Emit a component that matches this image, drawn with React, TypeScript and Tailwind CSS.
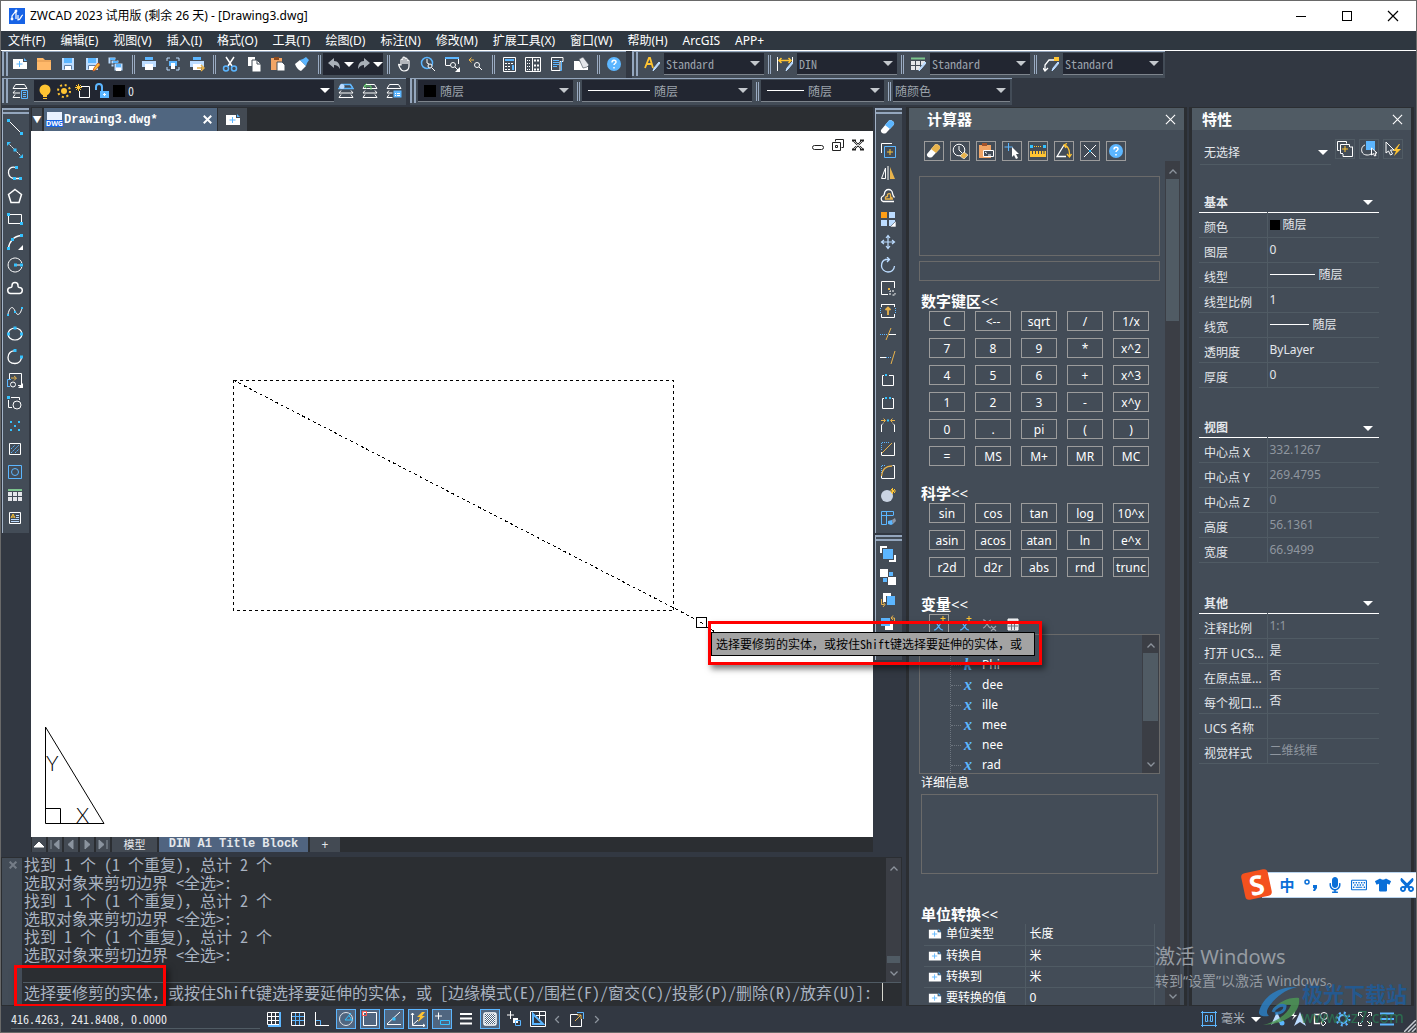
import type { ReactNode } from "react"
import { FaCut, FaMicrophone, FaRegKeyboard, FaTshirt } from "react-icons/fa"

const B = "#5cb6ff"
const C = "#35c2ff"
const Y = "#ffc432"
const O = "#e8b34c"
const L = "#bcdcff"

function Dot({ x, y, c = C }: { x: number; y: number; c?: string }) {
  return <rect x={x} y={y} width="3" height="3" fill={c} stroke="none" />
}

const pencil = <path d="M9 15l1-3 5-6 1 1-5 6z" fill={L} stroke={L} />
const corner = <path d="M16 11v5h-5z" fill="#fff" stroke="none" />
const layers = (
  <>
    <path d="M3.500 1.500h9l2.500 4h-14z" />
    <path d="M3 7.500l-2 2.500h14l-2-2.500M3 11.500l-2 3h14l-2-3" />
  </>
)
const floppy = (
  <>
    <path d="M2 2h12v12H2z" fill={L} stroke="none" />
    <path d="M4 2h8v5H4z" fill={B} stroke="none" />
    <path d="M4 9h8v5H4z" fill="#fff" stroke="none" />
    <path d="M4.500 13.500v-4h7v4" stroke="#5f7fa6" />
  </>
)
const printer = (
  <>
    <path d="M1 5h14v6H1z" fill={L} stroke="none" />
    <path d="M4 1h8v3H4z" fill={B} stroke="none" />
    <path d="M4 8h8v6H4z" fill="#fff" stroke="none" />
  </>
)

const icons: Record<string, ReactNode> = {
  // standard toolbar
  newDoc: (
    <>
      <path d="M1 3h10v3h4v7H1z" fill="#fff" stroke="none" />
      <path d="M12 2l3 3h-3z" fill={B} stroke="none" />
      <path d="M7.500 5v6M4.500 8h6" stroke={B} />
    </>
  ),
  open: (
    <>
      <path d="M1 2h6l2 2h6v10H1z" fill="#ffb96a" stroke="none" />
      <path d="M1 5h14" stroke="#d9924a" />
    </>
  ),
  save: floppy,
  saveAs: (
    <>
      {floppy}
      <path d="M9 15l1-3 4-5 2 1.500-4 5z" fill={Y} stroke="#d9652b" />
    </>
  ),
  saveAll: (
    <>
      <path d="M0 1h8v7H0zM3 4h8v7H3z" fill={L} stroke="#434c57" />
      <path d="M6 7h9v8H6z" fill={L} stroke="#434c57" />
      <path d="M8 8h5v3H8zM2 2h5v2H2zM5 5h5v2H5z" fill={B} stroke="none" />
      <path d="M8 12h5v3H8z" fill="#fff" stroke="none" />
    </>
  ),
  print: printer,
  preview: (
    <>
      <path d="M2 5V2h3M11 2h3v3M14 11v3h-3M5 14H2v-3" stroke={L} />
      <path d="M4 5h8v5H4z" fill={B} stroke="none" />
      <path d="M6 7h4v6H6z" fill="#fff" stroke="none" />
    </>
  ),
  publish: (
    <>
      {printer}
      <path d="M8 12h7M12 9l3 3-3 3" stroke={O} strokeWidth="1.500" />
    </>
  ),
  cut: (
    <>
      <path d="M4 1l6 9M12 1L6 10" strokeWidth="1.500" />
      <circle cx="4" cy="12.500" r="2.500" stroke={B} strokeWidth="1.500" />
      <circle cx="12" cy="12.500" r="2.500" stroke={B} strokeWidth="1.500" />
    </>
  ),
  copy: (
    <>
      <path d="M2 1h7v9H2z" fill="#fff" stroke="none" />
      <path d="M6 4h5l4 4v8H6z" fill="#fff" stroke="#434c57" />
      <path d="M11 4v4h4" stroke="#434c57" />
    </>
  ),
  paste: (
    <>
      <path d="M1 2h11v12H1z" fill="#f2a565" stroke="none" />
      <path d="M4 1h5v3H4z" fill="#8c4a1d" stroke="none" />
      <path d="M7 6h5l3 3v6H7z" fill="#fff" stroke="#434c57" />
    </>
  ),
  brush: (
    <>
      <path d="M1 8l5-4 6 6-5 5c-3-1-5-4-6-7z" fill="#fff" stroke="none" />
      <path d="M6 4l3-1 3-2 3 3-2 3-1 3z" fill={B} stroke="none" />
    </>
  ),
  undo: <path d="M2 7l6-5v3c4 0 6 3 6 8-2-3-3-4-6-4v3z" fill="#a9b0b8" stroke="none" />,
  redo: <path d="M14 7L8 2v3C4 5 2 8 2 13c2-3 3-4 6-4v3z" fill="#a9b0b8" stroke="none" />,
  pan: (
    <path
      d="M5 9V4a1 1 0 012 0v4-6a1 1 0 012 0v6-5a1 1 0 012 0v5-3a1 1 0 012 0v5c0 3-2 5-5 5-2 0-3-1-4-3L3 10c-1-2 0-2 1-1z"
      strokeWidth="1.200"
    />
  ),
  zoomRealtime: (
    <>
      <circle cx="7" cy="7" r="5.500" stroke={B} strokeWidth="1.500" />
      <path d="M7 3v4l2 1" />
      <circle cx="10" cy="10" r="2" fill="#434c57" />
      <path d="M12 12l3 3" />
    </>
  ),
  zoomWindow: (
    <>
      <path d="M1.500 9V2.500h13V8M1.500 9.500H6" />
      <path d="M1 2h14" stroke={B} strokeWidth="2" />
      <circle cx="9" cy="9" r="2.500" fill="#434c57" />
      <path d="M11 11l3 3" />
      {corner}
    </>
  ),
  zoomPrev: (
    <>
      <path d="M1 4h5M3.500 1.500L1 4l2.500 2.500" stroke={O} />
      <circle cx="9" cy="9" r="2.500" />
      <path d="M11 11l3 3" />
    </>
  ),
  calc: (
    <>
      <path d="M2.500 1.500h12v14h-12z" />
      <path d="M4 4h9M12 9v5" stroke={B} strokeWidth="2" />
      <path d="M4 7.500h9M4 10.500h6M4 13.500h6" strokeDasharray="2 1" />
    </>
  ),
  designCenter: (
    <>
      <path d="M.5 1.500h15v14H.5zM7.500 1.500v14" />
      <path d="M2 4.500h4M2 7.500h4M2 10.500h4M2 13.500h4" strokeDasharray="1 1" />
      <path d="M9 4.500h6M9 9.500h6M9 13.500h6" strokeWidth="2" strokeDasharray="2 1" />
    </>
  ),
  properties: (
    <>
      <path d="M11 14.500H2.500v-13H14v4h-3z" />
      <path d="M4 4.500h6M4 6.500h6M4 8.500h6M4 10.500h4" stroke={B} />
      <path d="M11 14.500h1.500V5" stroke={B} />
    </>
  ),
  clean: (
    <>
      <path d="M1 5h5l9 6v3H1z" fill="#fff" stroke="none" />
      <path d="M6 3l4-2 6 8-2 2-4 1z" fill="#e4e6ea" stroke="#434c57" strokeWidth=".6" />
    </>
  ),
  help: (
    <>
      <circle cx="8" cy="8" r="7" fill={B} stroke="none" />
      <path d="M6 6.500c0-3 4-3 4-.5 0 1.500-2 1.500-2 3M8 11v1.500" strokeWidth="1.500" />
    </>
  ),
  textStyle: (
    <>
      <path d="M1 12L5 2h1l3 10M3 8h5" stroke={Y} strokeWidth="1.800" />
      {pencil}
    </>
  ),
  dimStyle: (
    <>
      <path d="M.5 1v14M15.500 1v6" />
      <path d="M2 4.500h12M4.500 2L2 4.500 4.500 7M11.500 2L14 4.500 11.500 7" stroke={Y} strokeWidth="1.500" />
      {pencil}
    </>
  ),
  tableStyle: (
    <>
      <path d="M1 2.500h14" stroke="#7cc48d" strokeWidth="2" />
      <path d="M1 5h4v4H1zM6 5h4v4H6zM11 5h4v4h-4zM1 10h4v4H1zM6 10h4v4H6z" fill="#e4e6ea" stroke="none" />
      {pencil}
    </>
  ),
  leaderStyle: (
    <>
      <path d="M2 14V9l4-5h6M0 12l2 3 3-3" strokeWidth="1.300" />
      <path d="M11 1h5v4h-5z" fill={Y} stroke="none" />
      {pencil}
    </>
  ),
  // layer toolbar
  layerManager: (
    <>
      {layers}
      <path d="M8 7h8v9H8z" fill="#434c57" stroke="none" />
      <path d="M9.500 7.500h6v8h-6zM11 9.500h3M11 11.500h3M11 13.500h3" stroke={B} />
    </>
  ),
  layerCurrent: (
    <>
      {layers}
      <path d="M3.500 1.500h9l2.500 4h-14z" stroke={B} strokeWidth="1.500" />
      <circle cx="4" cy="3.500" r="2.500" fill={L} stroke="none" />
    </>
  ),
  layerPrev: (
    <>
      {layers}
      <path d="M9 7V3H2M4.500.5L2 3l2.500 2.500" stroke="#5fd068" />
    </>
  ),
  layerStates: (
    <>
      {layers}
      <path d="M7 7h9v8H7z" fill={B} stroke="#434c57" />
      <path d="M9 10.500h1M11 10.500h3M9 12.500h1M11 12.500h3" stroke="#fff" />
    </>
  ),
  bulb: (
    <>
      <circle cx="8" cy="7" r="5.500" fill={Y} stroke="none" />
      <path d="M6 11h4v3H6z" fill={Y} stroke="none" />
      <path d="M6 15.500h4" stroke={Y} />
    </>
  ),
  sun: (
    <>
      <circle cx="8" cy="8" r="3" fill={Y} stroke="none" />
      <circle cx="8" cy="8" r="6" stroke={Y} strokeWidth="2" strokeDasharray="2 2.710" />
    </>
  ),
  viewport: (
    <>
      <path d="M6 3.500h8.500v11h-10V8" />
      <path d="M3.500 1v7M0 4.500h7M1 2l5 5M6 2L1 7" stroke={Y} />
    </>
  ),
  unlock: (
    <>
      <path d="M2 7V4a3 3 0 016 0v5" stroke={B} strokeWidth="2" />
      <path d="M6 8h9v7H6z" fill={B} stroke="none" />
      <path d="M10.500 10v3M9 11.500h3" />
    </>
  ),
  // draw toolbar
  line: (
    <>
      <path d="M2 2l12 12" />
      <Dot x={0} y={0} />
      <Dot x={13} y={13} />
    </>
  ),
  xline: (
    <>
      <path d="M1 1l14 14" strokeDasharray="2 1" />
      <Dot x={6.500} y={6.500} />
      <path d="M0 0h4L0 4zM16 16h-4l4-4z" fill={C} stroke="none" />
    </>
  ),
  polyline: (
    <>
      <path d="M9 2.500C4 1 1 4 1.500 8S4 13.500 8 13.500h6" strokeWidth="1.300" />
      <Dot x={8} y={1} />
      <Dot x={6} y={12} />
      <Dot x={12} y={12} />
    </>
  ),
  polygon: <path d="M8 1.500l6.500 5-2.500 8H4l-2.500-8z" strokeWidth="1.500" />,
  rect: (
    <>
      <path d="M1.500 3.500h13v9h-13z" />
      <Dot x={0} y={2} />
      <Dot x={13} y={11} />
    </>
  ),
  arc: (
    <>
      <path d="M1.500 14C2 8 7 2 14 1.500" strokeWidth="1.300" />
      <Dot x={0} y={13} />
      <Dot x={4} y={4} />
      <Dot x={13} y={0} />
      {corner}
    </>
  ),
  circle: (
    <>
      <path d="M14.800 6A7 7 0 1014.800 10" />
      <path d="M8 8h6" />
      <Dot x={7} y={6.500} />
      <Dot x={13} y={6.500} />
    </>
  ),
  cloud: (
    <path d="M4 13.500a3 3 0 01-.5-6c1.500 0 1.500-.5 1.500-2a3 3 0 016 0c0 1.500 0 2 1.500 2a3 3 0 01-.5 6z" strokeWidth="1.500" />
  ),
  spline: (
    <>
      <path d="M1 11c2-8 5-8 7-3s5 5 7-3" />
      <path d="M0 11h2v2H0zM7 8h2v2H7zM14 4h2v2h-2z" fill={C} stroke="none" />
    </>
  ),
  ellipse: (
    <>
      <ellipse cx="8" cy="8" rx="7" ry="6" strokeWidth="1.200" />
      <Dot x={6.500} y={.5} />
      <Dot x={0} y={6.500} />
      <Dot x={13} y={6.500} />
    </>
  ),
  ellipseArc: (
    <>
      <path d="M8 2C4 1.500 1 4.500 1 8.500S4 14.500 8 14.500 14 12 14.500 8.500" strokeWidth="1.300" />
      <Dot x={6.500} y={0} />
      <Dot x={13} y={6.500} />
    </>
  ),
  insertBlock: (
    <>
      <path d="M2.500 7V1.500h12v12H11" />
      <path d="M.5 14V7.500H4M0 14.500h3" stroke={B} />
      <path d="M4 6h5M7 4l2.500 2L7 8.500" stroke={O} />
      <circle cx="6" cy="12.500" r="2.500" />
      {corner}
    </>
  ),
  makeBlock: (
    <>
      <path d="M4 2.500h8.500V5M1.500 5v7.500H5" />
      <circle cx="10" cy="10" r="4" />
      <Dot x={0} y={1} />
    </>
  ),
  point: (
    <g fill={C} stroke="none">
      <path d="M3 3h2v2H3zM11 3h2v2h-2zM7 7h2v2H7zM3 11h2v2H3zM11 11h2v2h-2z" />
    </g>
  ),
  hatch: (
    <>
      <path d="M2.500 2.500h11v11h-11z" />
      <path d="M4 8l4-4M4 12l8-8M8 12l4-4" stroke={B} strokeDasharray="2 1" />
    </>
  ),
  region: (
    <>
      <path d="M1.500 1.500h13v13h-13z" stroke={B} />
      <circle cx="8" cy="8" r="3.500" stroke={B} />
    </>
  ),
  table: (
    <>
      <path d="M1 3h14" stroke="#7cc48d" strokeWidth="2" />
      <path d="M1 5h4v4H1zM6 5h4v4H6zM11 5h4v4h-4zM1 10h4v4H1zM6 10h4v4H6zM11 10h4v4h-4z" fill="#e4e6ea" stroke="none" />
    </>
  ),
  mtext: (
    <>
      <path d="M2.500 2.500h11v11h-11z" />
      <path d="M4 8l2-4 2 4M4.500 7h3" stroke={Y} />
      <path d="M9 5.500h3M9 7.500h3M4 9.500h8M4 11.500h8" stroke={L} />
    </>
  ),
  // modify toolbar
  erase: (
    <>
      <path d="M9 1.500c2-1 6 1 5 4L7 13c-2 3-7 1-6-2z" fill="#fff" stroke="none" />
      <path d="M9 1.500c2-1 6 1 5 4L10 10 5 6z" fill={B} stroke="none" />
    </>
  ),
  offset: (
    <>
      <path d="M1.500 11V1.500H12" />
      <path d="M4.500 4.500h11v11h-11z" stroke={B} />
      <path d="M10 7v6M7 10h6" stroke={Y} />
    </>
  ),
  mirror: (
    <>
      <path d="M5.500 3v10.500h-4zM8 1v14" />
      <path d="M10 2v12h5z" fill={O} stroke="none" />
    </>
  ),
  align: (
    <>
      <path d="M14 13.500H3a3 3 0 010-5.500C4 8 4 7 4.500 5.500a4 4 0 018 0c.5 1.500.5 2.500 2 4" strokeWidth="1.300" />
      <path d="M13 11H5.500c-.5-2 .5-2.500 2-2.500V6.500c1-1.500 3-1 3 0v3h2" stroke={O} strokeWidth="1.300" />
    </>
  ),
  array: (
    <>
      <path d="M1 1h6v6H1z" fill="#ff9e16" stroke="none" />
      <path d="M9 1h6v6H9zM1 9h6v6H1zM9 9h6v6H9z" fill={L} stroke="none" />
      <path d="M10 16l6-6v6z" fill="#fff" stroke="#434c57" strokeWidth=".6" />
    </>
  ),
  move: <path d="M8 2v12M2 8h12M6 4l2-2.500L10 4M6 12l2 2.500 2-2.500M4 6L1.500 8 4 10M12 6l2.500 2-2.500 2" stroke={L} strokeWidth="1.200" />,
  rotate: <path d="M6 2.500C3 3 1.500 6 1.500 9s3 6 6.500 6 6-2 6.500-6M5 2.500h4M7 0l2.500 2.500L7 5" stroke={L} strokeWidth="1.300" />,
  scale: (
    <>
      <path d="M8 14.500H1.500v-13h13V8" />
      <path d="M10 15v-4h4M12.500 15H15v-2" strokeDasharray="2 1" />
      <path d="M8 8h2v2H8z" fill={O} stroke="none" />
    </>
  ),
  stretch: (
    <>
      <path d="M2 1.500h12M1.500 11v3.500h13V11M1.500 1v3M14.500 1v3" />
      <path d="M.5 5v5M15.500 5v5" stroke={B} strokeDasharray="1 1" />
      <path d="M8 12V5M5.500 7L8 4.500 10.500 7" stroke={O} strokeWidth="1.800" />
    </>
  ),
  trim: (
    <>
      <path d="M0 8.500h7" stroke={B} strokeDasharray="1 1" />
      <path d="M9 8.500h7" />
      <path d="M6 14l5-12" stroke={O} />
    </>
  ),
  extend: (
    <>
      <path d="M0 8.500h6" />
      <path d="M6 8.500h5" stroke={B} strokeDasharray="1 1" />
      <path d="M11 15l4-13" stroke={O} />
    </>
  ),
  breakAt: (
    <>
      <path d="M4 3.500H2.500v10h11v-10H9" />
      <path d="M5 2h2v2H5z" fill={C} stroke="none" />
    </>
  ),
  breakTwo: (
    <>
      <path d="M4 3.500H2.500v10h11v-10H12" />
      <path d="M5 2h2v2H5zM9 2h2v2H9z" fill={C} stroke="none" />
    </>
  ),
  join: (
    <>
      <path d="M1.500 14V7L3 5.500M14.500 14V7L13 5.500" />
      <path d="M1 2.500h4M3.500.5l2 2-2 2M15 2.500h-4M12.500.5l-2 2 2 2" stroke={O} />
      <path d="M7 1.500h2v2H7z" fill={C} stroke="none" />
    </>
  ),
  chamfer: (
    <>
      <path d="M1.500 14.500h13v-13M1.500 14v-3" />
      <path d="M1.500 9V1.500H10" stroke={B} strokeDasharray="1 1" />
      <path d="M2 12L12 2" stroke={O} />
    </>
  ),
  fillet: (
    <>
      <path d="M1.500 14.500h13v-13h-2M1.500 14v-2" />
      <path d="M1.500 9V1.500H6" stroke={B} strokeDasharray="1 1" />
      <path d="M1.500 12C2 6 5 2 12 2" stroke={O} strokeWidth="1.300" />
    </>
  ),
  explode: (
    <>
      <circle cx="7" cy="9" r="6" fill="#c9d3e2" stroke="none" />
      <path d="M12.500 1v6M10 4h6M11 2l4 4M15 2l-4 4" stroke={Y} />
    </>
  ),
  matchBlock: (
    <>
      <path d="M1.500 1.500h12V5M1.500 1.500v13h5v-13M1.500 5.500h12" stroke={B} />
      <path d="M8 11l4-1 1 4-2 1-3-1z" fill={B} stroke="none" />
      <path d="M12 10l3-2 1 3-3 3z" fill="#8d98a8" stroke="none" />
    </>
  ),
  bringFront: (
    <>
      <path d="M0 0h7v2H2v5H0zM16 9v7H9v-2h5V9z" fill="#fff" stroke="none" />
      <path d="M3 3h10v10H3z" fill={B} stroke="none" />
    </>
  ),
  sendBack: (
    <>
      <path d="M0 0h8v8H0zM8 8h8v8H8z" fill="#fff" stroke="none" />
      <path d="M9 3h4v4H9zM3 9h4v4H3z" fill={B} stroke="none" />
    </>
  ),
  bringAbove: (
    <>
      <path d="M3 1h8v3H6v6H3z" fill="#fff" stroke="none" />
      <path d="M7 4h8v9H7z" fill={B} stroke="none" />
      <path d="M1.500 7v5.500h3M3 10l2 2.500L3 15" stroke={O} />
    </>
  ),
  sendUnder: (
    <>
      <path d="M5 8h8v7H5z" fill="#fff" stroke="none" />
      <path d="M1 3h9v8H1z" fill={B} stroke="none" />
      <path d="M14.500 8V3H11M13 .5L11 3l2 2" stroke={O} />
    </>
  ),
  // calculator toolbar
  clear: (
    <>
      <path d="M9 1.500c2-1 6 1 5 4L7 13c-2 3-7 1-6-2z" fill="#fff" stroke="none" />
      <path d="M9 1.500c2-1 6 1 5 4L10 10 5 6z" fill={O} stroke="none" />
    </>
  ),
  clearHistory: (
    <>
      <circle cx="7" cy="7" r="5.800" />
      <path d="M7 3v4l3 3" />
      <path d="M8 13l4-4 4 3-4 4z" fill={O} stroke="#fff" strokeWidth=".6" />
    </>
  ),
  pasteValue: (
    <>
      <path d="M1 2h12v13H1z" fill="#f2a565" stroke="none" />
      <path d="M4 0h5v3H4z" fill="#a4532a" stroke="none" />
      <path d="M5.500 7.500h10v6h-10z" fill="#434c57" />
      <path d="M7 9l2 1.500M10 12h3" />
    </>
  ),
  pick: (
    <>
      <path d="M4.500 0v8M.5 4h8" stroke={B} />
      <path d="M8 4v10l2-2 2 4 2-1-2-4h3z" fill="#fff" stroke="none" />
    </>
  ),
  distance: (
    <>
      <path d="M4 3.500h8" stroke={Y} strokeDasharray="1 1" />
      <path d="M0 8h16v6H0z" fill={Y} stroke="none" />
      <path d="M2.500 8v3M5.500 8v3M8.500 8v3M11.500 8v3M14 8v3" stroke="#434c57" />
      <Dot x={0} y={2} />
      <Dot x={13} y={2} />
    </>
  ),
  angle: (
    <>
      <path d="M8 2L1 13.500h9" strokeWidth="1.300" />
      <path d="M8 2c4 1 6 4 5.500 11M11 11l2.500 3 2-3M11 .5L8 2l2 3" stroke={Y} strokeWidth="1.300" />
    </>
  ),
  intersect: (
    <>
      <path d="M2 2l12 12M14 2L2 14" />
      <path d="M7 7h2v2H7z" fill={C} stroke="none" />
    </>
  ),
  // properties toolbar
  toggleAdd: (
    <>
      <path d="M2.500 9.500h-2v-9h9v2M6 12.500H3.500v-9h9V6M15.500 6v9.500H6V13M13 6h3" />
      <path d="M8 5v6M5 8h6" stroke={Y} />
    </>
  ),
  selectObjects: (
    <>
      <path d="M4 4C1 5 0 8 1 11s6 4 9 2" />
      <path d="M5 0h9v9H5z" fill={B} stroke="none" />
      <path d="M10.500 7v7l2-1.500 1 2.500 1.500-.5-1-2.500h2z" fill="#434c57" />
    </>
  ),
  quickSelect: (
    <>
      <path d="M1 1v11l2.500-2 2 4 2-1-2-4H9z" fill="#434c57" />
      <path d="M14 3L8 10h3l-2 5 7-7h-4l3-5z" fill={Y} stroke="none" />
    </>
  ),
  // status bar
  snap: (
    <>
      <path d="M1.500 1.500h12v12h-12zM5.500 1v13M9.500 1v13M1 5.500h13M1 9.500h13" />
      <path d="M14 1v14H2" stroke={B} strokeWidth="2" />
    </>
  ),
  grid: (
    <>
      <path d="M5.500 2v12M9.500 2v12M2 5.500h12M2 9.500h12" stroke={B} />
      <path d="M1.500 1.500h13v13h-13z" />
    </>
  ),
  ortho: (
    <>
      <path d="M1.500 1v13.500H15" />
      <path d="M2 9.500h4.500V14" stroke={B} />
    </>
  ),
  polar: (
    <>
      <circle cx="8" cy="8" r="6.500" stroke="#e4e6ea" />
      <path d="M7 9h8M7 9l6-7M11 5c2 1 2 3 2 4" stroke={C} />
    </>
  ),
  osnap: (
    <>
      <path d="M1.500 1.500h13v13h-13z" />
      <path d="M.5.5h4v4h-4z" stroke="#ff5a50" />
    </>
  ),
  otrack: (
    <>
      <path d="M1 13.500h14M1 13L14 1" />
      <Dot x={6.500} y={6.500} />
    </>
  ),
  ducs: (
    <>
      <path d="M2.500 2v12.500H15M1 4l1.500-2L4 4M2.500 14L8 9M13 13l2 1.500-2 1.500" />
      <path d="M12 1L7 6h3L8 11l7-6h-3l3-4z" fill={Y} stroke="none" />
    </>
  ),
  dynInput: (
    <>
      <path d="M4.500 1.500v7M1 5h7" />
      <path d="M6.500 9.500h9v4h-9z" stroke={C} />
    </>
  ),
  lineweight: <path d="M2 3h12M2 7.500h12M2 12.500h12" strokeWidth="2" />,
  transparency: (
    <>
      <rect x="2" y="2" width="12" height="12" rx="1.500" strokeWidth="1.500" />
      <path d="M3 4.500h10M3 6.500h10M3 8.500h10M3 10.500h10M3 12.500h10" strokeDasharray="1 1" />
      <path d="M4 3.500h9M4 5.500h9M4 7.500h9M4 9.500h9M4 11.500h9" strokeDasharray="1 1" />
    </>
  ),
  cycle: (
    <>
      <path d="M4.500 0v8M1 4h7" />
      <path d="M7 7h5v5H7z" fill="#fff" stroke="none" />
      <path d="M9.500 9.500h5v5h-5z" stroke={B} />
    </>
  ),
  quickProps: (
    <>
      <path d="M.5.500h15v15H.5zM9.500.5V8M15 4.500H6" />
      <path d="M3 3l10 10H3z" stroke={B} strokeWidth="2" />
    </>
  ),
  popOut: (
    <>
      <path d="M9 3.500H1.500v12h11V8" />
      <path d="M8 1.500h6.500V8" stroke={B} />
      <path d="M6 10l6-6M8 4h4v4" stroke={O} />
    </>
  ),
  units: (
    <>
      <path d="M0 1.500h16M0 14.500h16M1.500 0v16M14.500 0v16" stroke={B} />
      <path d="M4.500 4.500h2v6h-2zM9.500 4.500h2v6h-2zM8 9.500v1" stroke={B} />
    </>
  ),
  annoVisible: (
    <>
      <path d="M8 1l6 13-6-4-6 4z" fill={L} stroke="none" />
      <circle cx="13" cy="12" r="2.500" fill={B} stroke="none" />
    </>
  ),
  annoAuto: (
    <>
      <path d="M9 1l6 14-6-4-6 4z" fill={L} stroke="none" />
      <path d="M4 0L0 5h3L1 9l5-5H3z" fill="#fff" stroke="none" />
    </>
  ),
  isolate: (
    <>
      <path d="M7 3.500H1.500v9H7" strokeWidth="1.300" />
      <circle cx="11" cy="5" r="3.500" />
      <path d="M10 9l3 3-3 3-2-3z" />
    </>
  ),
  gear: (
    <>
      <circle cx="8" cy="8" r="4" stroke={B} strokeWidth="2" />
      <circle cx="8" cy="8" r="6.300" stroke={B} strokeWidth="2.400" strokeDasharray="2 2.950" />
    </>
  ),
  fullscreen: <path d="M1.500 5V1.500H5M11 1.500h3.500V5M14.500 11v3.500H11M5 14.500H1.500V11M3 3l3 3M13 3l-3 3M13 13l-3-3M3 13l3-3" />,
  menu: <path d="M1 2.500h14M1 8h14M1 13.500h14" stroke={B} strokeWidth="2" />,
  sheet: (
    <>
      <path d="M3 3h10v11H3z" fill="#e4e6ea" />
      <path d="M3 6h10M3 10h10M6.500 6v8M9.500 6v8" stroke="#6b737d" />
    </>
  ),
  varNew: (
    <>
      <path d="M3 6c4-1 4 8 9 8M12 6C9 6 7 14 3 14" stroke={B} strokeWidth="1.200" />
      <path d="M12 0v5M9.500 2.500h5" stroke={Y} />
    </>
  ),
  varDelete: (
    <path d="M2 4c4-1 4 8 8 8M10 4C7 4 5 12 2 12M10 10l5 5M15 10l-5 5" stroke="#9aa1aa" strokeWidth="1.200" />
  ),
}

function Icon({ name, className = "size-4" }: { name: string; className?: string }) {
  return (
    <svg viewBox="0 0 16 16" className={`shrink-0 ${className}`} fill="none" stroke="#fff" aria-hidden="true">
      {icons[name]}
    </svg>
  )
}

function Caret({ className = "text-white" }: { className?: string }) {
  return (
    <svg viewBox="0 0 10 5" className={`h-[5px] w-[10px] shrink-0 ${className}`} aria-hidden="true">
      <path d="M0 0h10L5 5z" fill="currentColor" />
    </svg>
  )
}

function Chevron({ className = "" }: { className?: string }) {
  return (
    <svg viewBox="0 0 8 5" className={`h-[5px] w-2 shrink-0 ${className}`} fill="none" stroke="#8c939c" aria-hidden="true">
      <path d="M.5 4.500L4 1l3.500 3.500" strokeWidth="1.300" />
    </svg>
  )
}

function Cross({ className = "size-3", weight = 1.2 }: { className?: string; weight?: number }) {
  return (
    <svg viewBox="0 0 12 12" className={className} fill="none" stroke="currentColor" aria-hidden="true">
      <path d="M1 1l10 10M11 1L1 11" strokeWidth={weight} />
    </svg>
  )
}

function ToolButton({ name }: { name: string }) {
  return (
    <button aria-label={name} className="flex h-full w-6 shrink-0 items-center justify-center">
      <Icon name={name} />
    </button>
  )
}

function Sep() {
  return <span className="mr-0.5 ml-1 h-[19px] w-[3px] shrink-0 border-x border-[#9aabc2]" />
}

function Grip() {
  return <span className="h-full w-[6px] shrink-0 border-x-2 border-[#94a6bd]" />
}

function VGrip() {
  return <span className="mb-px h-[6px] w-full shrink-0 border-y-2 border-[#94a6bd]" />
}

function Combo({ label, value, className, children }: { label: string; value: string; className: string; children?: ReactNode }) {
  return (
    <div
      className={`flex h-[22px] shrink-0 items-center gap-1 border-b border-[#7d848c] bg-[#222631] pr-1 pl-[2px] text-[#9ca3ac] ${className}`}
    >
      {children}
      <select aria-label={label} className="min-w-0 flex-1 appearance-none bg-transparent outline-none">
        <option>{value}</option>
      </select>
      <Caret className="text-[#c4c8cd]" />
    </div>
  )
}

const menus = [
  "文件(F)", "编辑(E)", "视图(V)", "插入(I)", "格式(O)", "工具(T)", "绘图(D)", "标注(N)",
  "修改(M)", "扩展工具(X)", "窗口(W)", "帮助(H)", "ArcGIS", "APP+",
]

const drawTools = [
  "line", "xline", "polyline", "polygon", "rect", "arc", "circle", "cloud", "spline",
  "ellipse", "ellipseArc", "insertBlock", "makeBlock", "point", "hatch", "region", "table", "mtext",
]

const modifyTools = [
  "erase", "offset", "mirror", "align", "array", "move", "rotate", "scale", "stretch",
  "trim", "extend", "breakAt", "breakTwo", "join", "chamfer", "fillet", "explode", "matchBlock",
]

const orderTools = ["bringFront", "sendBack", "bringAbove", "sendUnder"]

const calcTools = ["clear", "clearHistory", "pasteValue", "pick", "distance", "angle", "intersect", "help"]

const numKeys = [
  "C", "<--", "sqrt", "/", "1/x",
  "7", "8", "9", "*", "x^2",
  "4", "5", "6", "+", "x^3",
  "1", "2", "3", "-", "x^y",
  "0", ".", "pi", "(", ")",
  "=", "MS", "M+", "MR", "MC",
]

const sciKeys = [
  "sin", "cos", "tan", "log", "10^x",
  "asin", "acos", "atan", "ln", "e^x",
  "r2d", "d2r", "abs", "rnd", "trunc",
]

const variables = [
  ["k", "Phi"],
  ["x", "dee"],
  ["x", "ille"],
  ["x", "mee"],
  ["x", "nee"],
  ["x", "rad"],
]

const units = [
  ["单位类型", "长度"],
  ["转换自", "米"],
  ["转换到", "米"],
  ["要转换的值", "0"],
]

const history = [
  "找到 1 个 (1 个重复)，总计 2 个",
  "选取对象来剪切边界 <全选>:",
  "找到 1 个 (1 个重复)，总计 2 个",
  "选取对象来剪切边界 <全选>:",
  "找到 1 个 (1 个重复)，总计 2 个",
  "选取对象来剪切边界 <全选>:",
]

type Prop = { label: string; value: string; mark?: string; dim?: boolean }

const propGroups: { title: string; rows: Prop[] }[] = [
  {
    title: "基本",
    rows: [
      { label: "颜色", value: "随层", mark: "mr-[3px] h-[10px] w-[10px] bg-black" },
      { label: "图层", value: "0" },
      { label: "线型", value: "随层", mark: "mr-1 h-px w-[45px] bg-white" },
      { label: "线型比例", value: "1" },
      { label: "线宽", value: "随层", mark: "mr-1 h-px w-[39px] bg-white" },
      { label: "透明度", value: "ByLayer" },
      { label: "厚度", value: "0" },
    ],
  },
  {
    title: "视图",
    rows: [
      { label: "中心点 X", value: "332.1267", dim: true },
      { label: "中心点 Y", value: "269.4795", dim: true },
      { label: "中心点 Z", value: "0", dim: true },
      { label: "高度", value: "56.1361", dim: true },
      { label: "宽度", value: "66.9499", dim: true },
    ],
  },
  {
    title: "其他",
    rows: [
      { label: "注释比例", value: "1:1", dim: true },
      { label: "打开 UCS...", value: "是" },
      { label: "在原点显...", value: "否" },
      { label: "每个视口...", value: "否" },
      { label: "UCS 名称", value: "" },
      { label: "视觉样式", value: "二维线框", dim: true },
    ],
  },
]

function TitleBar() {
  return (
    <header className="flex h-[30px] shrink-0 items-center bg-white pl-2 text-black">
      <svg viewBox="0 0 16 16" className="mr-[5px] size-4" fill="none" stroke="#fff" aria-hidden="true">
        <path d="M0 0h16v16H0z" fill="#1763e6" stroke="none" />
        <path d="M3 12V8l4-5v8M9 7v5c3 0 3-5 5-5" strokeWidth="1.200" />
        <circle cx="7" cy="3" r="1" fill="#fff" />
        <circle cx="3" cy="11" r="1" fill="#fff" />
      </svg>
      <h1 className="flex-1 text-[12px]">ZWCAD 2023 试用版 (剩余 26 天) - [Drawing3.dwg]</h1>
      <button aria-label="最小化" className="flex h-full w-[46px] items-center justify-center">
        <span className="h-px w-[10px] bg-black" />
      </button>
      <button aria-label="最大化" className="flex h-full w-[46px] items-center justify-center">
        <span className="size-[10px] border border-black" />
      </button>
      <button aria-label="关闭" className="flex h-full w-[46px] items-center justify-center">
        <Cross />
      </button>
    </header>
  )
}

function Toolbars() {
  return (
    <div className="shrink-0 bg-[#323842] pl-px font-['Noto_Sans_Mono_CJK_SC','Noto_Sans_CJK_SC',monospace] text-[12px]">
      <div className="flex h-[27px]">
        <div className="mr-[6px] flex items-center border-t border-[#94a6bd] bg-[#434c57] pb-0.5">
          <Grip />
          {["newDoc", "open", "save", "saveAs", "saveAll"].map((n) => <ToolButton key={n} name={n} />)}
          <Sep />
          {["print", "preview", "publish"].map((n) => <ToolButton key={n} name={n} />)}
          <Sep />
          {["cut", "copy", "paste", "brush"].map((n) => <ToolButton key={n} name={n} />)}
          <Sep />
          <div className="flex h-[22px] items-center bg-[#222631] pl-0.5">
            <button aria-label="undo" className="px-px"><Icon name="undo" /></button>
            <button aria-label="undo list" className="px-px"><Caret /></button>
            <button aria-label="redo" className="px-px"><Icon name="redo" /></button>
            <button aria-label="redo list"><Caret /></button>
          </div>
          <Sep />
          {["pan", "zoomRealtime", "zoomWindow", "zoomPrev"].map((n) => <ToolButton key={n} name={n} />)}
          <Sep />
          {["calc", "designCenter", "properties", "clean"].map((n) => <ToolButton key={n} name={n} />)}
          <Sep />
          <ToolButton name="help" />
        </div>
        <div className="flex items-center border-t border-[#94a6bd] bg-[#434c57] pr-0.5 pb-0.5">
          <Grip />
          <span className="w-0.5" />
          <ToolButton name="textStyle" />
          <Combo label="文字样式" value="Standard" className="w-[100px]" />
          <Sep />
          <ToolButton name="dimStyle" />
          <Combo label="标注样式" value="DIN" className="w-[100px]" />
          <Sep />
          <ToolButton name="tableStyle" />
          <Combo label="表格样式" value="Standard" className="w-[100px]" />
          <Sep />
          <ToolButton name="leaderStyle" />
          <Combo label="引线样式" value="Standard" className="w-[100px]" />
        </div>
      </div>
      <div className="flex h-[27px]">
        <div className="mr-1 flex items-center border-t border-[#94a6bd] bg-[#434c57] pb-0.5">
          <Grip />
          <ToolButton name="layerManager" />
          <div className="ml-0.5 flex h-[22px] w-[300px] items-center gap-[3px] border-b border-[#7d848c] bg-[#222631] pr-1 pl-[3px] text-[#dfe3e8]">
            <Icon name="bulb" />
            <Icon name="sun" />
            <Icon name="viewport" />
            <Icon name="unlock" />
            <span className="size-3 bg-black" />
            <select aria-label="图层" className="min-w-0 flex-1 appearance-none bg-transparent outline-none">
              <option>0</option>
            </select>
            <Caret />
          </div>
          {["layerCurrent", "layerPrev", "layerStates"].map((n) => <ToolButton key={n} name={n} />)}
        </div>
        <div className="flex items-center border-t border-[#94a6bd] bg-[#434c57] pr-0.5 pb-0.5">
          <Grip />
          <Combo label="颜色" value="随层" className="ml-0.5 w-[155px]">
            <span className="ml-1 size-3 bg-black" />
          </Combo>
          <Sep />
          <Combo label="线型" value="随层" className="w-[170px]">
            <span className="ml-1 h-px w-[62px] bg-white" />
          </Combo>
          <Sep />
          <Combo label="线宽" value="随层" className="w-[123px]">
            <span className="ml-1 h-px w-[37px] bg-white" />
          </Combo>
          <Sep />
          <Combo label="打印样式" value="随颜色" className="w-[117px] pl-1" />
        </div>
      </div>
    </div>
  )
}

function SideBar({ tools, className = "" }: { tools: string[]; className?: string }) {
  return (
    <div className={`flex w-[27px] flex-col items-center border-l border-[#a3b3c7] bg-[#434c57] ${className}`}>
      <VGrip />
      {tools.map((n) => (
        <button key={n} aria-label={n} className="flex h-[23px] w-full items-center justify-center pr-0.5">
          <Icon name={n} />
        </button>
      ))}
    </div>
  )
}

function Canvas() {
  return (
    <div className="relative min-h-0 flex-1 bg-white">
      <svg className="absolute inset-0 h-full w-full" fill="none" stroke="#000" aria-hidden="true">
        <g shapeRendering="crispEdges">
          <rect x="202.500" y="249.500" width="440" height="230" strokeDasharray="3 3" />
          <path d="M202 249l464 240" strokeDasharray="3 3" />
          <rect x="665.500" y="486.500" width="10" height="10" />
          <path d="M669 491l4 2M676 496l8 5" strokeDasharray="3 2" />
        </g>
      </svg>
      <svg className="absolute bottom-3 left-3 h-[100px] w-16 overflow-visible" fill="none" stroke="#000" aria-hidden="true">
        <path d="M2.500 2v96.500H61z" />
        <path d="M2.500 83.500h15v15" />
        <text x="33" y="98" fontSize="21" fill="#000" stroke="none" className="font-['Lato'] font-light">X</text>
        <text x="3" y="46" fontSize="21" fill="#000" stroke="none" className="font-['Lato'] font-light">Y</text>
      </svg>
      <div className="absolute top-2 right-[9px] flex gap-2 text-black">
        <button aria-label="最小化图形">
          <svg viewBox="0 0 12 12" className="size-3" fill="#fff" stroke="#222"><rect x=".5" y="6.500" width="11" height="4" rx="2" /></svg>
        </button>
        <button aria-label="还原图形">
          <svg viewBox="0 0 12 12" className="size-3" fill="#fff" stroke="#222">
            <path d="M3.500 2.500v-2h8v8h-2M.5 3.500h8v8h-8zM3.500 6.500h2v2h-2z" />
          </svg>
        </button>
        <button aria-label="关闭图形">
          <svg viewBox="0 0 12 12" className="size-3" fill="none" stroke="#222">
            <path d="M1.500 1.500l9 9M10.500 1.500l-9 9M0 1.500h4M8 1.500h4M0 10.500h4M8 10.500h4" strokeWidth="2" />
            <path d="M2 2l8 8M10 2l-8 8" stroke="#fff" strokeWidth=".7" />
          </svg>
        </button>
      </div>
      {/* dynamic prompt next to the pick box */}
      <div className="absolute top-[490px] left-[677px] z-20 h-[44px] w-[334px] border-[3px] border-[#ff0000] pt-[8px] pr-1 shadow-[3px_4px_6px_rgba(0,0,0,0.5)]">
        <div className="h-6 border border-black bg-[#a3a3a3] pl-1 font-['Noto_Sans_Mono_CJK_SC','Noto_Sans_CJK_SC',monospace] text-[12px] leading-[22px] whitespace-nowrap text-black">
          选择要修剪的实体，或按住Shift键选择要延伸的实体，或
        </div>
      </div>
    </div>
  )
}

function SheetTabs() {
  return (
    <div className="flex h-[15px] shrink-0 gap-0.5 bg-[#2b2e32] pl-px text-[12px] leading-[13px] text-[#e3e7eb]">
      {["M2 9l5-5 5 5z", "M3 2v9M11 2L6 6.500l5 4.500z", "M9 2L4 6.500 9 11z", "M5 2l5 4.500L5 11z", "M3 2l5 4.500L3 11zM11 2v9"].map((d, i) => (
        <button key={d} aria-label={`布局 ${i + 1}`} className="flex w-[14px] items-center justify-center bg-[#434a53]">
          <svg viewBox="0 0 14 14" className={`size-[14px] ${i ? "text-[#8b949f]" : "text-white"}`} fill="currentColor" stroke="currentColor">
            <path d={d} />
          </svg>
        </button>
      ))}
      <button className="w-[45px] bg-[#434a53] text-[11px]">模型</button>
      <button className="w-[149px] bg-[#506480] font-['Liberation_Mono',monospace] font-bold whitespace-nowrap">DIN A1 Title Block</button>
      <button className="w-[30px] bg-[#434a53]">+</button>
    </div>
  )
}

function CommandLine() {
  return (
    <section className="relative mt-[5px] mr-1 flex h-[149px] shrink-0 border border-[#2b2e32] bg-[#2b2e32] font-['Noto_Sans_Mono_CJK_SC','Noto_Sans_CJK_SC',monospace] text-[16px] text-[#a9b3c1]">
      <div className="w-[21px] shrink-0 border-r border-[#2b2e32] bg-[#434c57] pt-[3px] pl-[7px] text-[#757d87]">
        <button aria-label="关闭命令行" className="block"><Cross className="size-2" weight={3} /></button>
      </div>
      <div className="flex min-w-0 flex-1 flex-col">
        <div className="flex min-h-0 flex-1 border-b border-[#505b64]">
          <p className="-mt-[3px] flex-1 pl-px leading-[18px] whitespace-pre-line">{history.join("\n")}</p>
          <div className="flex w-[15px] flex-col items-center bg-[#3b3e45] pt-2 pb-[6px]">
            <Chevron />
            <span className="mt-auto mb-2 h-[7px] w-[13px] bg-[#505b64]" />
            <Chevron className="rotate-180" />
          </div>
        </div>
        <div className="flex h-[22px] items-center pb-1 pl-px">
          <label htmlFor="cmd" className="whitespace-nowrap">
            选择要修剪的实体，或按住Shift键选择要延伸的实体，或 [边缘模式(E)/围栏(F)/窗交(C)/投影(P)/删除(R)/放弃(U)]:
          </label>
          <input id="cmd" className="ml-[10px] h-[18px] min-w-0 flex-1 border-l border-[#d8d8d0] bg-transparent outline-none" />
        </div>
      </div>
      <div className="absolute -bottom-[2px] left-[12px] h-[42px] w-[152px] border-[3px] border-[#ff0000] shadow-[3px_4px_6px_rgba(0,0,0,0.5)]" />
    </section>
  )
}

function PanelTitle({ title, className }: { title: string; className: string }) {
  return (
    <div className={`flex h-[22px] shrink-0 items-center justify-between bg-[#505b64] text-white ${className}`}>
      <h2 className="text-[15px] leading-5 font-bold">{title}</h2>
      <button aria-label={`关闭${title}`}><Cross className="size-[11px]" /></button>
    </div>
  )
}

function Heading({ children }: { children: ReactNode }) {
  return <h3 className="pl-0.5 text-[15px] leading-5 font-bold text-white">{children}<span className="font-normal">&lt;&lt;</span></h3>
}

function KeyPad({ keys }: { keys: string[] }) {
  return (
    <div className="ml-[10px] grid w-[220px] grid-cols-5 gap-x-[10px] gap-y-[7px] text-[12px] text-white">
      {keys.map((k) => (
        <button key={k} className="h-5 w-9 border border-[#9c9c9c] leading-[17px]">{k}</button>
      ))}
    </div>
  )
}

function Calculator() {
  return (
    <section className="flex w-[281px] shrink-0 flex-col border-x-[3px] border-t border-b border-[#2b2e32] bg-[#434c57]">
      <PanelTitle title="计算器" className="pr-[8px] pl-[18px]" />
      <div className="flex gap-[6px] pt-[11px] pl-[15px]">
        {calcTools.map((n) => (
          <button key={n} aria-label={n} className="flex size-5 items-center justify-center border border-[#9c9c9c]">
            <Icon name={n} />
          </button>
        ))}
      </div>
      <div className="flex min-h-0 flex-1">
        <div className="min-w-0 flex-1 overflow-hidden pt-[15px] pr-[5px] pl-[10px]">
          <textarea aria-label="历史记录" readOnly className="block h-20 w-full resize-none border border-[#6a6a6a]" />
          <input aria-label="表达式" className="mt-[5px] block h-5 w-full border border-[#6a6a6a]" />
          <div className="mt-[10px]"><Heading>数字键区</Heading></div>
          <KeyPad keys={numKeys} />
          <div className="mt-[17px]"><Heading>科学</Heading></div>
          <KeyPad keys={sciKeys} />
          <div className="mt-[17px]"><Heading>变量</Heading></div>
          <div className="flex h-5 items-center gap-2 pl-[10px]">
            <button aria-label="新建变量" className="flex size-5 items-center justify-center border border-[#9c9c9c]"><Icon name="varNew" /></button>
            <button aria-label="编辑变量"><Icon name="varNew" /></button>
            <button aria-label="删除变量"><Icon name="varDelete" /></button>
            <button aria-label="返回变量"><Icon name="sheet" /></button>
          </div>
          <div className="flex h-[140px] border border-[#6a6a6a] text-[12px] text-white">
            <ul className="ml-[30px] flex-1 overflow-hidden border-l border-dotted border-[#6d757f] pt-5">
              {variables.map(([kind, name]) => (
                <li key={name} className="flex h-5 items-center">
                  <span className="w-[10px] border-t border-dotted border-[#6d757f]" />
                  <i className="w-[21px] pl-[3px] font-['Liberation_Serif',serif] text-[16px] leading-5 font-bold text-[#5cb6ff]">{kind}</i>
                  {name}
                </li>
              ))}
            </ul>
            <div className="flex w-[17px] flex-col items-center bg-[#3b3e45] pt-2 pb-[6px]">
              <Chevron />
              <span className="mt-[5px] h-[68px] w-[15px] bg-[#505b64]" />
              <Chevron className="mt-auto rotate-180" />
            </div>
          </div>
          <label htmlFor="detail" className="block pl-0.5 text-[12px] leading-[18px] text-white">详细信息</label>
          <textarea id="detail" readOnly className="mt-0.5 ml-0.5 block h-20 w-[237px] resize-none border border-[#6a6a6a]" />
          <div className="mt-[30px]"><Heading>单位转换</Heading></div>
          <table className="ml-[5px] w-[231px] table-fixed text-[12px] text-white">
            <tbody>
              {units.map(([label, value]) => (
                <tr key={label} className="h-[21px] border-b border-[#505b64]">
                  <th className="w-[101px] border-r border-[#505b64] pl-1 text-left font-normal">
                    <span className="flex items-center gap-1 leading-5 whitespace-nowrap">
                      <Icon name="newDoc" className="size-[14px]" />
                      {label}
                    </span>
                  </th>
                  <td className="border-r border-[#505b64] pl-1 leading-5">{value}</td>
                </tr>
              ))}
            </tbody>
          </table>
        </div>
        <div className="mr-[4px] flex w-[15px] flex-col items-center bg-[#3b3e45] pt-[8px] pb-[6px]">
          <Chevron />
          <span className="mt-[5px] h-[142px] w-[13px] bg-[#505b64]" />
          <Chevron className="mt-auto rotate-180" />
        </div>
      </div>
    </section>
  )
}

function Properties() {
  return (
    <section className="mr-[2px] ml-[2px] flex w-[225px] shrink-0 flex-col border-x-[3px] border-t border-b border-[#2b2e32] bg-[#434c57] text-[12px] text-[#e3e7eb]">
      <PanelTitle title="特性" className="pr-[8px] pl-[10px]" />
      <div className="flex h-[35px] shrink-0 pl-2">
        <div className="mr-1 flex w-[131px] items-center border-b border-[#505b64] pt-[11px] pr-[3px] pl-1">
          <select aria-label="选择" className="min-w-0 flex-1 appearance-none bg-transparent outline-none">
            <option>无选择</option>
          </select>
          <Caret />
        </div>
        {["toggleAdd", "selectObjects", "quickSelect"].map((n) => (
          <button key={n} aria-label={n} className="mt-[9px] mr-1 flex size-5 items-center justify-center border border-[#505b64]">
            <Icon name={n} />
          </button>
        ))}
      </div>
      <div className="min-h-0 w-[187px] flex-1 overflow-hidden pl-[7px]">
        {propGroups.map((g) => (
          <table key={g.title} className="mb-[3px] w-full table-fixed">
            <colgroup>
              <col className="w-[68px]" />
              <col />
            </colgroup>
            <thead>
              <tr className="h-[47px] border-b border-white">
                <th colSpan={2} className="p-0 align-bottom">
                  <span className="flex items-center justify-between pr-[6px] pl-[5px] leading-[18px]">
                    {g.title}
                    <Caret />
                  </span>
                </th>
              </tr>
            </thead>
            <tbody>
              {g.rows.map((r) => (
                <tr key={r.label} className="h-[25px] border-b border-[#505b64]">
                  <th className="border-r border-[#505b64] pt-[5px] pl-[5px] text-left leading-[19px] font-normal whitespace-nowrap">{r.label}</th>
                  <td className={`pl-0.5 leading-6 ${r.dim ? "text-[#8f969f]" : ""}`}>
                    <span className="flex items-center">
                      {r.mark && <span className={r.mark} />}
                      {r.value}
                    </span>
                  </td>
                </tr>
              ))}
            </tbody>
          </table>
        ))}
      </div>
    </section>
  )
}

function StatusBar() {
  const toggles: [string, boolean][] = [
    ["snap", false], ["grid", false], ["ortho", false], ["polar", true], ["osnap", true], ["otrack", true],
    ["ducs", true], ["dynInput", true], ["lineweight", false], ["transparency", true], ["cycle", false], ["quickProps", false],
  ]
  return (
    <footer className="relative flex h-[26px] shrink-0 items-center bg-[#323842] pl-[10px] text-[12px] text-[#e8ebee]">
      <span className="h-[23px] w-[249px] self-start border-b border-[#505b64] font-['Noto_Sans_Mono_CJK_SC','Noto_Sans_CJK_SC',monospace] leading-[25px]">
        416.4263, 241.8408, 0.0000
      </span>
      <div className="ml-1 flex gap-1">
        {toggles.map(([n, on]) => (
          <button
            key={n}
            aria-label={n}
            aria-pressed={on}
            className={`flex size-5 items-center justify-center ${on ? "border border-[#5cb6ff] bg-[#506680]" : ""}`}
          >
            <Icon name={n} />
          </button>
        ))}
      </div>
      <button aria-label="向左" className="ml-[5px]"><Chevron className="-rotate-90" /></button>
      <button aria-label="弹出" className="mx-[8px]"><Icon name="popOut" /></button>
      <button aria-label="向右"><Chevron className="rotate-90" /></button>
      <div className="ml-auto flex items-center gap-[6px] pr-[21px]">
        <Icon name="units" />
        <select aria-label="单位" className="-ml-0.5 w-6 appearance-none bg-transparent text-[#aab1ba] outline-none">
          <option>毫米</option>
        </select>
        <Caret className="mr-0.5 text-white" />
        {["annoVisible", "annoAuto", "isolate", "gear", "fullscreen", "menu"].map((n) => (
          <button key={n} aria-label={n}><Icon name={n} /></button>
        ))}
      </div>
      <svg viewBox="0 0 12 12" className="absolute right-0 bottom-0 size-3" stroke="#c8ccd1" aria-hidden="true">
        <path d="M0 12L12 0M4 12l8-8M8 12l4-4" strokeWidth="1.500" />
      </svg>
    </footer>
  )
}

function ImeBar() {
  return (
    <div className="absolute right-0 bottom-[132px] z-30 flex h-[31px] w-[173px] items-center">
      <div className="z-10 flex size-[27px] shrink-0 -rotate-12 items-center justify-center rounded-[4px] bg-[#f4511e] text-[27px] leading-none font-bold text-white">
        S
      </div>
      <div className="-ml-2 flex h-[26px] flex-1 items-center gap-2 border-y border-[#b9d4ee] bg-white pl-[17px] text-[#0a6fd8]">
        <span className="w-4 text-center text-[15px] leading-4 font-bold">中</span>
        <svg viewBox="0 0 16 16" className="size-4 shrink-0" fill="currentColor" aria-hidden="true">
          <circle cx="4" cy="5" r="2" fill="none" stroke="currentColor" strokeWidth="1.500" />
          <path d="M10 8h4v3l-2 3h-2l1-3h-1z" />
        </svg>
        <FaMicrophone className="size-4 shrink-0" />
        <FaRegKeyboard className="size-4 shrink-0" />
        <FaTshirt className="size-4 shrink-0" />
        <FaCut className="size-4 shrink-0 -rotate-90" />
      </div>
    </div>
  )
}

function Watermarks() {
  return (
    <div className="pointer-events-none absolute right-0 bottom-0 z-30 h-[89px] w-[261px]">
      <p className="text-[20px] leading-7 whitespace-nowrap text-[#959ba2]">激活 Windows</p>
      <p className="text-[14px] leading-5 whitespace-nowrap text-[#959ba2]">转到“设置”以激活 Windows。</p>
      <svg viewBox="0 0 44 44" className="absolute bottom-1 left-[102px] size-11 opacity-80" aria-hidden="true">
        <path d="M40 3C22 2 6 12 2 28c0 4 4 5 10 4-3-3-3-6 2-12C20 12 28 6 40 3z" fill="#2b82c9" />
        <path d="M42 14c2 14-12 26-36 27 14-4 24-10 28-20-6-1-12 0-18 4 6-7 16-12 26-11z" fill="#4d9a55" />
        <path d="M16 28c2-5 8-8 12-6 0 5-5 8-10 7" fill="none" stroke="#2b82c9" strokeWidth="3" />
      </svg>
      <p className="absolute right-[9px] bottom-[26px] text-[21px] leading-6 font-bold whitespace-nowrap text-[#24598f]">极光下载站</p>
      <p className="absolute right-[12px] bottom-[5px] text-[16px] leading-5 whitespace-nowrap text-[#2b7a55] opacity-80">www.xz7.com</p>
    </div>
  )
}

export default function App() {
  return (
    <div className="relative flex h-screen min-h-[1033px] flex-col overflow-hidden border border-[#696969] bg-[#323842] font-['Noto_Sans','Noto_Sans_CJK_SC',sans-serif]">
      <TitleBar />
      <nav className="flex h-5 shrink-0 items-center gap-[15px] border-b border-white bg-[#2f3740] pl-[7px] text-[12px] text-white">
        {menus.map((m) => <button key={m} className="whitespace-nowrap">{m}</button>)}
      </nav>
      <Toolbars />
      <main className="flex min-h-0 flex-1 pt-[2px]">
        <div className="flex min-w-0 flex-1 flex-col">
          <div className="flex min-h-0 flex-1">
            <div className="w-[30px] shrink-0 pt-px pl-px">
              <SideBar tools={drawTools} className="h-[425px]" />
            </div>
            <div className="flex min-w-0 flex-1 flex-col">
              <div className="flex h-[24px] shrink-0 items-stretch bg-[#2b2e32] pt-px pl-px text-white">
                <button aria-label="文档列表" className="mr-0.5 flex w-[10px] items-center justify-center bg-[#434c57] text-[9px]">▼</button>
                <div className="mr-px flex w-[173px] items-center bg-[#506680] px-[3px]">
                  <span className="flex h-[15px] w-[15px] items-end justify-center bg-[#e9f2ff]">
                    <span className="bg-[#1763e6] text-[7px] leading-[7px] font-bold">DWG</span>
                  </span>
                  <button className="flex-1 pl-0.5 text-left font-['Liberation_Mono',monospace] text-[12px] font-bold">Drawing3.dwg*</button>
                  <button aria-label="关闭文档"><Cross className="mr-0.5 size-[9px]" weight={2.5} /></button>
                </div>
                <button aria-label="新建" className="flex w-[29px] items-center justify-center bg-[#434a53]"><Icon name="newDoc" /></button>
              </div>
              <Canvas />
              <SheetTabs />
            </div>
            <div className="w-[33px] shrink-0 pt-px pl-0.5">
              <SideBar tools={modifyTools} className="h-[425px]" />
              <SideBar tools={orderTools} className="mt-[2px] h-[125px]" />
            </div>
          </div>
          <CommandLine />
        </div>
        <Calculator />
        <Properties />
      </main>
      <StatusBar />
      <ImeBar />
      <Watermarks />
    </div>
  )
}
